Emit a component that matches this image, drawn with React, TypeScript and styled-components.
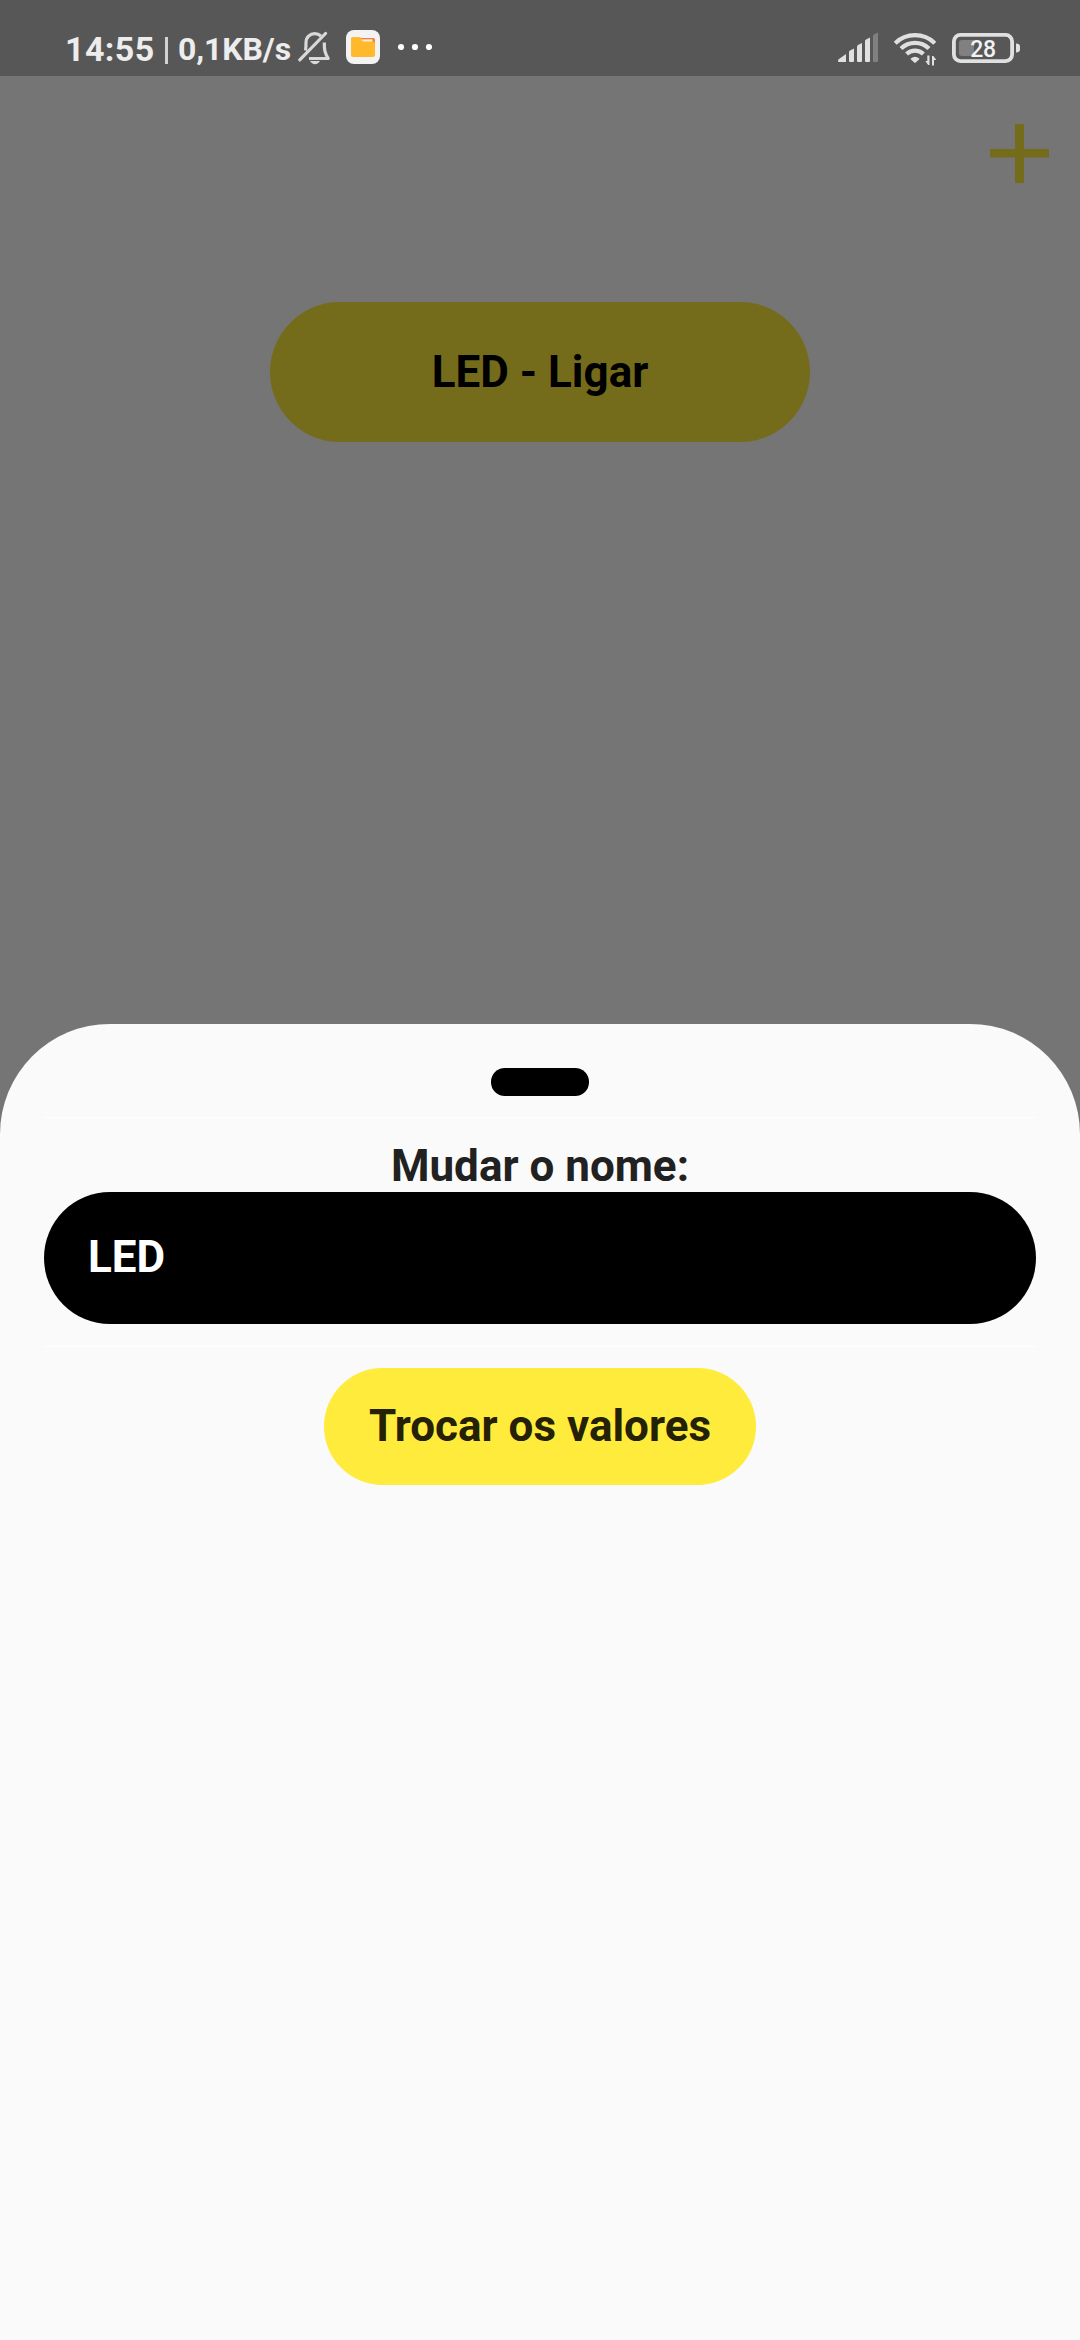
import React from "react";
import styled, { createGlobalStyle } from "styled-components";

const GlobalStyle = createGlobalStyle`
  *, *::before, *::after { box-sizing: border-box; }
  html, body { margin: 0; padding: 0; background: #757575; }
  button, input { font: inherit; border: 0; margin: 0; outline: 0; }
  svg { display: block; flex: none; }
`;

const Screen = styled.div`
  width: 1080px;
  height: 2340px;
  display: flex;
  flex-direction: column;
  background: #757575;
  font-family: Roboto, "Noto Sans", sans-serif;
  overflow: hidden;
`;

const StatusBar = styled.header`
  height: 76px;
  flex: none;
  display: flex;
  justify-content: space-between;
  padding: 20px 60px 0 65px;
  background: #575757;
  color: #ededed;
`;

const StatusGroup = styled.div`
  display: flex;
  height: 56px;
`;

const Clock = styled.span`
  width: 100px;
  font-size: 34px;
  line-height: 58px;
  font-weight: 700;
  letter-spacing: 0.4px;
  white-space: nowrap;
`;

const Separator = styled.span`
  width: 3px;
  height: 27px;
  margin: 17px 10px 0 0;
  background: #d2d2d2;
`;

const NetSpeed = styled.span`
  width: 120px;
  font-size: 32px;
  line-height: 59px;
  font-weight: 700;
  letter-spacing: -0.1px;
  white-space: nowrap;
`;

const AppBar = styled.div`
  height: 226px;
  flex: none;
  display: flex;
  justify-content: flex-end;
  padding: 48px 31px 0 0;
`;

const AddButton = styled.button`
  width: 59px;
  height: 59px;
  padding: 0;
  background: transparent;
`;

const DeviceButton = styled.button`
  width: 540px;
  height: 140px;
  flex: none;
  align-self: center;
  padding: 0;
  border-radius: 70px;
  background: #756c1b;
  color: #000;
  font-size: 44px;
  font-weight: 700;
`;

const Sheet = styled.section`
  height: 1316.5px;
  flex: none;
  margin-top: auto;
  display: flex;
  flex-direction: column;
  align-items: center;
  padding: 44.5px 44px 0;
  border-radius: 110px 110px 0 0;
  background: #fafafa;
`;

const Handle = styled.div`
  width: 98px;
  height: 27.5px;
  flex: none;
  border-radius: 13.75px;
  background: #000;
`;

const Divider = styled.div<{ $top: number }>`
  align-self: stretch;
  height: 1px;
  flex: none;
  margin-top: ${(p) => p.$top}px;
  background: #fff;
`;

const FieldLabel = styled.label`
  height: 52px;
  margin-top: 22px;
  color: #212121;
  font-size: 44px;
  line-height: 52px;
  font-weight: 700;
`;

const NameField = styled.input`
  width: 992px;
  height: 132px;
  flex: none;
  padding: 0 44px 2px;
  border-radius: 66px;
  background: #000;
  color: #fff;
  && { font-size: 44px; font-weight: 700; }
`;

const SubmitButton = styled.button`
  width: 432px;
  height: 117px;
  flex: none;
  margin-top: 21px;
  padding: 0 0 2px;
  border-radius: 58.5px;
  background: #ffeb3b;
  color: #242107;
  font-size: 44px;
  font-weight: 700;
  white-space: nowrap;
`;

const BellOffIcon = () => (
  <svg width="48" height="56" viewBox="298 20 48 56" fill="none">
    <g stroke="#d9d9d9" strokeWidth="3.200" strokeLinejoin="round">
      <path d="M305.400 50.500c.6-2 .6-4.500 .6-8c0-5.500 4-8.800 8.700-8.800c2.600 0 4.600 .8 6.200 2.300" />
      <path d="M324.300 42.500c0 7 .2 10 3.900 16H309" />
      <path d="M299.800 59.800L325.500 33.500" strokeLinecap="round" />
    </g>
    <path d="M310 61h10c-1 2-3 3.200-5 3.200s-4-1.200-5-3.200z" fill="#d9d9d9" />
  </svg>
);

const FolderIcon = () => (
  <svg width="52" height="56" viewBox="346 20 52 56">
    <rect x="346" y="30" width="34" height="34" rx="8" fill="#f3f3f3" />
    <path d="M360 38h13.500q1.500 0 1.500 1.500V46h-15z" fill="#ea8048" />
    <path d="M361 39.300h11.500v3H361z" fill="#fde9cf" />
    <path
      d="M352.500 37h7q1 0 1.500 1l1.200 2.500q.5 1 1.500 1H373q2 0 2 2V55q0 2-2 2h-20q-2 0-2-2V38.500q0-1.500 1.500-1.500z"
      fill="#ffb92b"
    />
  </svg>
);

const MoreIcon = () => (
  <svg width="34" height="56" viewBox="398 20 34 56" fill="#fff">
    <circle cx="401" cy="47" r="3.100" />
    <circle cx="415" cy="47" r="3.100" />
    <circle cx="429" cy="47" r="3.100" />
  </svg>
);

const SignalIcon = () => (
  <svg width="55" height="56" viewBox="838 20 55 56" fill="#e0e0e0">
    <path d="M838 60.500q0-1 1-1.500l7-5v8h-7q-1 0-1-1z" />
    <path d="M849 52q0-1 1-1.500l4-2V61q0 1-1 1h-3q-1 0-1-1z" />
    <path d="M857 46.500q0-1 1-1.500l4-2v18q0 1-1 1h-3q-1 0-1-1z" />
    <path d="M865 41q0-1 1-1.500l4-2V61q0 1-1 1h-3q-1 0-1-1z" />
    <path d="M873 36q0-1 1-1.500l4-2V61q0 1-1 1h-3q-1 0-1-1z" fill="#808080" />
  </svg>
);

const WifiIcon = () => (
  <svg width="59" height="56" viewBox="893 20 59 56" fill="none">
    <g stroke="#e0e0e0" strokeWidth="4.200">
      <path d="M895.200 43.200a28.500 28.500 0 0 1 39.600 0" />
      <path d="M901 48.500a20 20 0 0 1 28 0" />
      <path d="M906.600 54a12.200 12.200 0 0 1 16.800 0" />
    </g>
    <path d="M911 58.300q4-3.200 8 0q.8.600 0 1.300l-3.200 3q-.8.600-1.600 0l-3.200-3q-.8-.7 0-1.300z" fill="#e0e0e0" />
    <path d="M927.300 55.500h2.200V65h-1.300l-2.900-3.900h2zM932 65.500h2V60h2.300L933.400 56H932z" fill="#e0e0e0" />
  </svg>
);

const BatteryIcon = () => (
  <svg width="68" height="56" viewBox="952 20 68 56">
    <rect x="953.900" y="34.900" width="58.200" height="26.200" rx="6.500" fill="none" stroke="#e0e0e0" strokeWidth="3.800" />
    <path d="M962 40h12v16h-12q-3 0-3-3V43q0-3 3-3z" fill="#808080" />
    <path d="M1016 43.500q4 0 4 3v3q0 3-4 3z" fill="#e0e0e0" />
    <text
      x="983"
      y="56.700"
      textAnchor="middle"
      fontFamily="Roboto, sans-serif"
      fontSize="23"
      fontWeight="500"
      letterSpacing="-0.300"
      fill="#f2f2f2"
    >
      28
    </text>
  </svg>
);

const PlusIcon = () => (
  <svg width="59" height="59" viewBox="0 0 59 59">
    <path d="M25 0h9v25h25v8.500H34V59h-9V33.500H0V25h25z" fill="#756c1b" />
  </svg>
);

export default function App() {
  return (
    <>
      <GlobalStyle />
      <Screen>
        <StatusBar>
          <StatusGroup>
            <Clock>14:55</Clock>
            <Separator />
            <NetSpeed>0,1KB/s</NetSpeed>
            <BellOffIcon />
            <FolderIcon />
            <MoreIcon />
          </StatusGroup>
          <StatusGroup>
            <SignalIcon />
            <WifiIcon />
            <BatteryIcon />
          </StatusGroup>
        </StatusBar>
        <AppBar>
          <AddButton aria-label="Adicionar">
            <PlusIcon />
          </AddButton>
        </AppBar>
        <DeviceButton>LED - Ligar</DeviceButton>
        <Sheet>
          <Handle />
          <Divider $top={21.5} />
          <FieldLabel htmlFor="nome">Mudar o nome:</FieldLabel>
          <NameField id="nome" defaultValue="LED" />
          <Divider $top={22} />
          <SubmitButton>Trocar os valores</SubmitButton>
        </Sheet>
      </Screen>
    </>
  );
}
